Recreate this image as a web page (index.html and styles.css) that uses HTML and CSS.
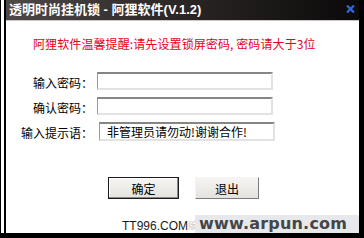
FILE: index.html
```html
<!DOCTYPE html>
<html lang="zh-CN">
<head>
<meta charset="utf-8">
<title>透明时尚挂机锁 - 阿狸软件(V.1.2)</title>
<link rel="stylesheet" href="styles.css">
</head>
<body>
<div class="screen">
  <div class="strip"></div>
  <div class="window">
    <div class="titlebar">
      <span class="title">透明时尚挂机锁 - 阿狸软件(V.1.2)</span>
      <svg class="close" width="9" height="8" viewBox="0 0 9 8"><path d="M1 0.5 L8 7.5 M8 0.5 L1 7.5" stroke="#2a6be0" stroke-width="2.2"/></svg>
    </div>
    <div class="content">
      <p class="notice">阿狸软件温馨提醒:请先设置锁屏密码, 密码请大于3位</p>
      <div class="form">
        <label class="label">输入密码：</label>
        <input class="field" type="text">
        <label class="label">确认密码：</label>
        <input class="field" type="text">
        <label class="label">输入提示语：</label>
        <input class="field field-hint" type="text" value="非管理员请勿动!谢谢合作!">
      </div>
      <div class="buttons">
        <button class="btn btn-default">确定</button>
        <button class="btn btn-exit">退出</button>
      </div>
      <div class="footer">
        <span class="site">TT996.COM</span>
        <span class="faint">版</span>
        <span class="banner">www.arpun.com</span>
      </div>
    </div>
  </div>
</div>
</body>
</html>
```
FILE: styles.css
```css
* { box-sizing: border-box; }
html, body { margin: 0; padding: 0; background: #000; }
body { font-family: "Noto Sans CJK SC", "Noto Sans", sans-serif; }
.screen {
  display: flex;
  width: 364px;
  height: 238px;
  background: #000;
  overflow: hidden;
}
.strip {
  width: 3px;
  height: 233px;
  margin-left: 1px;
  background: #fff;
}
.window {
  width: 355px;
  height: 233px;
  border-left: 2px solid #000;
  background: #fff;
  display: flex;
  flex-direction: column;
}
.titlebar {
  height: 22px;
  border-bottom: 1px solid #c9c6c6;
  background: linear-gradient(to right, #4e4848 0%, #2e2929 45%, #0b0909 100%);
  display: flex;
  align-items: center;
  justify-content: space-between;
  padding: 0 3px 1px 3px;
}
.title {
  color: #fff;
  font-family: "Liberation Sans", "Noto Sans CJK SC", sans-serif;
  font-size: 13px;
  font-weight: bold;
  line-height: 14px;
}
.close { margin-right: 1px; margin-top: -2px; }
.content {
  flex: 1;
  display: flex;
  flex-direction: column;
}
.notice {
  margin: 15px 0 0 27px;
  color: #e3001c;
  font-size: 12px;
  line-height: 16px;
  letter-spacing: 0.1px;
}
.form {
  margin-top: 20px;
  display: grid;
  grid-template-columns: 87px 176px;
  column-gap: 4px;
  row-gap: 7px;
  align-items: center;
}
.label {
  justify-self: end;
  font-size: 12px;
  line-height: 14px;
  color: #000;
  padding-top: 3px;
}
.field {
  height: 18px;
  width: 176px;
  margin: 0;
  border: 2px solid;
  border-color: #858585 #e2e2e2 #e2e2e2 #9a9a9a;
  border-left-width: 1px;
  background: #fff;
  font-family: "Noto Sans CJK SC", sans-serif;
  font-size: 12px;
  padding: 0 0 0 7px;
  color: #000;
  outline: none;
}
.field-hint { margin-left: 2px; height: 19px; }
.buttons {
  margin-top: 36px;
  padding-left: 102px;
  display: flex;
  gap: 16px;
}
.btn {
  height: 22px;
  margin: 0;
  padding: 0;
  font-family: "Noto Sans CJK SC", sans-serif;
  font-size: 12px;
  color: #000;
  background: linear-gradient(#f6f5f3, #e4e2de);
  border: 1px solid;
  border-color: #f4f4f4 #7c7c7c #7c7c7c #f4f4f4;
}
.btn-default {
  width: 71px;
  border: 1px solid #1a1a1a;
  box-shadow: inset -1px -1px 0 #8a8a8a, inset 1px 1px 0 #fff;
}
.btn-exit { width: 64px; }
.footer {
  margin-top: 16px;
  display: flex;
  align-items: center;
  justify-content: flex-end;
  height: 18px;
}
.site {
  font-family: "Liberation Sans", Arial, sans-serif;
  font-size: 12px;
  color: #1a1a1a;
  margin-top: 3px;
}
.faint {
  font-size: 9px;
  color: #c8c8c8;
  margin: 3px 0 0 0;
  width: 7px;
}
.banner {
  width: 164px;
  height: 18px;
  background: #e6e8ec;
  color: #454545;
  font-family: "DejaVu Sans", sans-serif;
  font-weight: bold;
  font-size: 16px;
  line-height: 18px;
  padding-left: 4px;
  letter-spacing: 0.2px;
  white-space: nowrap;
  overflow: hidden;
}
```
